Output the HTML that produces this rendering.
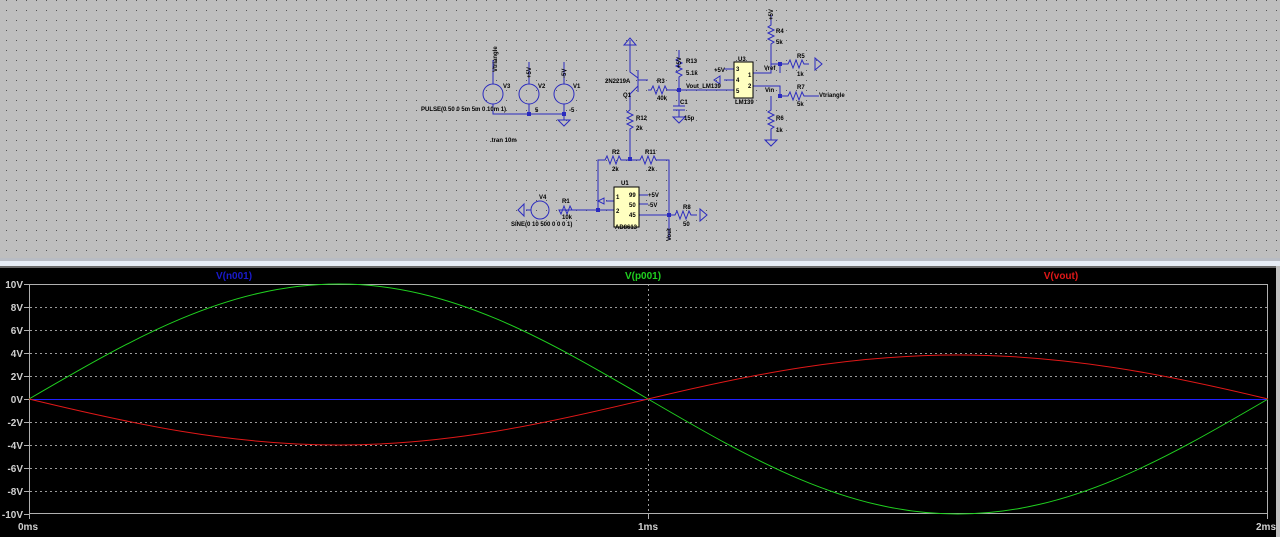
<!DOCTYPE html>
<html><head><meta charset="utf-8"><style>
html,body{margin:0;padding:0;background:#000;}
body{width:1280px;height:537px;overflow:hidden;position:relative;font-family:"Liberation Sans",Arial,sans-serif;}
svg{position:absolute;left:0;top:0;}
</style></head><body>
<svg width="1280" height="537" viewBox="0 0 1280 537" xmlns="http://www.w3.org/2000/svg">
<defs>
<pattern id="g" width="10" height="10" patternUnits="userSpaceOnUse" x="6" y="0">
<rect x="0" y="0" width="1" height="1" fill="#555"/>
</pattern>
</defs>
<rect x="0" y="0" width="1280" height="258" fill="#bebebe"/>
<rect x="0" y="0" width="1280" height="258" fill="url(#g)"/>
<rect x="0" y="258" width="1280" height="3" fill="#b8bcc4"/>
<rect x="0" y="261" width="1280" height="5" fill="#e6ecf5"/>
<rect x="0" y="266" width="1280" height="2" fill="#6a6a6a"/>
<rect x="1276" y="266" width="4" height="271" fill="#c0c0c0"/>

<g stroke="#2b2bbf" stroke-width="1" fill="none">
 <circle cx="493" cy="94" r="10"/><circle cx="529" cy="94" r="10"/><circle cx="564" cy="94" r="10"/>
 <path d="M493 60V84M529 62V84M564 62V84M493 104V114H564V120M529 104V114M564 104V114"/>
 <path d="M558 120h12l-6 6z"/>
 <path d="M630 40V72l8 6M638 70V92M638 80l10-0M638 86l-8 8V110"/>
 <path d="M624 45h12l-6-7z"/>
 <path d="M648 90h3l2-4 3 8 3-8 3 8 3-8 2 4h14M679 90H735"/>
 <path d="M679 50V58l-3 2 6 3-6 3 6 3-6 3 6 3-3 2V90V106M673 106h12M673 110h12M679 110V117M673 117h12l-6 6z"/>
 <path d="M630 110l-3 2 6 3-6 3 6 3-6 3 6 3-3 2V160"/>
 <path d="M598 210V160h7l2-4 3 8 3-8 3 8 3-8 2 4H640l2-4 3 8 3-8 3 8 3-8 2 4H669V215"/>
 <path d="M580 210h-8l-2-4-3 8-3-8-3 8-2-4H614M606 201h8M604 198v6l-6-3z"/>
 <circle cx="540" cy="210" r="9"/>
 <path d="M531 210h-5M524 204v12l-6-6z"/>
 <path d="M639 195h9M639 204h9M639 215H669h6l2-4 3 8 3-8 3 8 3-8 2 4h6M700 209v12l7-6z"/>
 <path d="M669 215V240"/>
 <path d="M724 69h10M724 80h10M720 76v8l-6-4zM753 73h18V64h9h8l2-4 3 8 3-8 3 8 3-8 2 4h5M815 58v12l7-6zM753 86h27V96h8l2-4 3 8 3-8 3 8 3-8 2 4h15"/>
 <path d="M771 15V25l-3 2 6 3-6 3 6 3-6 3 6 3-3 2V64M780 64V73M780 86V96M771 96V110l-3 2 6 3-6 3 6 3-6 3 6 3-3 2V140M765 140h12l-6 6z"/>
</g>
<g fill="#2b2bbf">
 <rect x="527" y="112" width="4" height="4"/><rect x="562" y="112" width="4" height="4"/>
 <rect x="677" y="88" width="4" height="4"/><rect x="628" y="157" width="4" height="4"/>
 <rect x="596" y="208" width="4" height="4"/><rect x="667" y="213" width="4" height="4"/>
 <rect x="778" y="62" width="4" height="4"/><rect x="778" y="94" width="4" height="4"/>
</g>
<rect x="734" y="62" width="19" height="36" fill="#ffffc0" stroke="#000" stroke-width="1"/>
<rect x="614" y="187" width="25" height="40" fill="#ffffc0" stroke="#000" stroke-width="1"/>
<g font-size="6" fill="#000" font-weight="bold">
 <text x="503" y="88">V3</text><text x="538" y="88">V2</text><text x="573" y="88">V1</text>
 <text x="421" y="111">PULSE(0 50 0 5m 5m 0 10m 1)</text><text x="535" y="112">5</text><text x="569" y="112">-5</text>
 <text x="490" y="142">.tran 10m</text>
 <text x="605" y="83">2N2219A</text><text x="623" y="97">Q1</text>
 <text x="657" y="83">R3</text><text x="657" y="100">40k</text>
 <text x="686" y="63">R13</text><text x="686" y="75">5.1k</text>
 <text x="680" y="104">C1</text><text x="684" y="120">15p</text>
 <text x="686" y="88">Vout_LM139</text>
 <text x="636" y="120">R12</text><text x="636" y="130">2k</text>
 <text x="612" y="154">R2</text><text x="612" y="171">2k</text>
 <text x="645" y="154">R11</text><text x="648" y="171">2k</text>
 <text x="621" y="185">U1</text><text x="616" y="199">1</text><text x="616" y="213">2</text>
 <text x="629" y="197">99</text><text x="629" y="207">50</text><text x="629" y="217">45</text>
 <text x="648" y="197">+5V</text><text x="648" y="207">-5V</text>
 <text x="615" y="229">AD8613</text>
 <text x="539" y="199">V4</text><text x="562" y="203">R1</text><text x="562" y="219">10k</text>
 <text x="511" y="226">SINE(0 10 500 0 0 0 1)</text>
 <text x="683" y="209">R8</text><text x="683" y="226">50</text>
 <text x="738" y="61">U3</text><text x="736" y="71">3</text><text x="736" y="82">4</text><text x="736" y="93">5</text>
 <text x="748" y="77">1</text><text x="748" y="88">2</text>
 <text x="714" y="72">+5V</text><text x="735" y="104">LM139</text>
 <text x="764" y="70">Vref</text><text x="765" y="92">Vin</text>
 <text x="776" y="33">R4</text><text x="776" y="44">5k</text>
 <text x="797" y="58">R5</text><text x="797" y="76">1k</text>
 <text x="797" y="89">R7</text><text x="797" y="106">5k</text>
 <text x="819" y="97">Vtriangle</text>
 <text x="776" y="120">R6</text><text x="776" y="132">1k</text>
 <text transform="translate(497,72) rotate(-90)">Vtriangle</text>
 <text transform="translate(531,78) rotate(-90)">+5V</text>
 <text transform="translate(566,78) rotate(-90)">-5V</text>
 <text transform="translate(681,68) rotate(-90)">+5V</text>
 <text transform="translate(773,20) rotate(-90)">+5V</text>
 <text transform="translate(671,241) rotate(-90)">Vout</text>
</g>

<g stroke="#9a9a9a" stroke-width="1" stroke-dasharray="2,3">
 <path d="M30 307.5H1268M30 330.5H1268M30 353.5H1268M30 376.5H1268M30 422.5H1268M30 445.5H1268M30 468.5H1268M30 491.5H1268M648.5 284V514"/>
</g>
<rect x="29.5" y="284.5" width="1238" height="229" fill="none" stroke="#b0b0b0" stroke-width="1"/>
<g stroke="#b0b0b0"><path d="M24 284.5h6M24 307.5h6M24 330.5h6M24 353.5h6M24 376.5h6M24 399.5h6M24 422.5h6M24 445.5h6M24 468.5h6M24 491.5h6M24 514.5h6M648.5 514v5M1267.5 514v5M29.5 514v5"/></g>
<path d="M30 399.5H1268" stroke="#2020ff" stroke-width="1"/>
<path d="M29 399 C132.5 338.6 227 284 338.75 284 C450.5 284 544.5 338.6 648 399 C751.5 459.4 846 514 957.75 514 C1069.5 514 1164.5 459.4 1268 399" stroke="#20d020" stroke-width="1" fill="none"/>
<path d="M29 399 C132.5 424 230 445 338.75 445 C447 445 544.5 424 648 399 C751.5 374 850 355 957.75 355 C1065 355 1164.5 374 1268 399" stroke="#e01818" stroke-width="1" fill="none"/>
<g font-size="10" font-weight="bold" fill="#d0d0d0" text-anchor="end">
 <text x="23" y="288">10V</text><text x="23" y="311">8V</text><text x="23" y="334">6V</text><text x="23" y="357">4V</text><text x="23" y="380">2V</text><text x="23" y="403">0V</text><text x="23" y="426">-2V</text><text x="23" y="449">-4V</text><text x="23" y="472">-6V</text><text x="23" y="495">-8V</text><text x="23" y="518">-10V</text>
</g>
<g font-size="10" font-weight="bold" fill="#d0d0d0" text-anchor="middle">
 <text x="28" y="530">0ms</text><text x="648" y="530">1ms</text><text x="1266" y="530">2ms</text>
</g>
<g font-size="10" font-weight="bold" text-anchor="middle">
 <text x="234" y="279" fill="#1a1acc">V(n001)</text>
 <text x="643" y="279" fill="#20d020">V(p001)</text>
 <text x="1061" y="279" fill="#e01818">V(vout)</text>
</g>
</svg>
</body></html>
